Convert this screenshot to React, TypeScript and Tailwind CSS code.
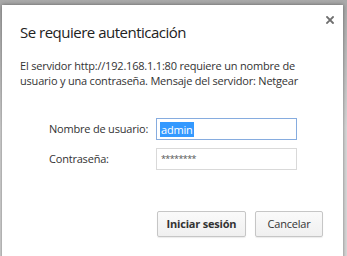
export default function App() {
  return (
    <div className="w-[347px] h-[256px] overflow-hidden bg-gradient-to-b from-[#a9a9a9] via-[#d9d9d9] to-[#d9d9d9] pt-[5px] pl-[2px] pr-[4px] font-['Open_Sans',sans-serif] text-[#333]">
      <div className="relative h-[260px] bg-white shadow-[0_0_4px_rgba(0,0,0,0.45)]">
        {/* close */}
        <svg className="absolute right-[9px] top-[11px]" width="8" height="8" viewBox="0 0 8 8">
          <path d="M1 1 L7 7 M7 1 L1 7" stroke="#6f6f6f" strokeWidth="1.8" strokeLinecap="square" />
        </svg>

        <h1 className="pl-[18px] pt-[17px] text-[15px] leading-[20px] tracking-[-0.5px] text-[#222]">Se requiere autenticación</h1>

        <p className="mt-[16px] pl-[18px] pr-[20px] text-[11px] leading-[15px] tracking-[-0.2px] text-[#333]">
          El servidor http://192.168.1.1:80 requiere un nombre de usuario y una contraseña. Mensaje del servidor: Netgear
        </p>

        <div className="mt-[30px] grid grid-cols-[107px_141px] items-center gap-y-[8px] pl-[47px] text-[11px] tracking-[-0.2px]">
          <label className="whitespace-nowrap">Nombre de usuario:</label>
          <div className="h-[22px] border border-[#86acdf] bg-white px-[3px] flex items-center">
            <span className="bg-[#3399ff] text-white leading-[15px] px-[1px]">admin</span>
          </div>
          <label className="whitespace-nowrap">Contraseña:</label>
          <div className="h-[22px] border border-[#d9d9d9] bg-white px-[4px] flex items-start pt-[3px] text-[9px] tracking-[-0.6px] text-[#555]">
            ********
          </div>
        </div>

        <div className="mt-[41px] flex justify-end gap-[9px] pr-[20px] text-[11px] tracking-[-0.2px]">
          <button className="h-[26px] w-[89px] rounded-[2px] border border-[#c6c6c6] bg-gradient-to-b from-[#fafafa] to-[#f0f0f0] font-bold text-[#333] shadow-[0_1px_1px_rgba(0,0,0,0.08)]">
            Iniciar sesión
          </button>
          <button className="h-[26px] w-[68px] rounded-[2px] border border-[#c6c6c6] bg-gradient-to-b from-[#fafafa] to-[#f0f0f0] text-[#333] shadow-[0_1px_1px_rgba(0,0,0,0.08)]">
            Cancelar
          </button>
        </div>
      </div>
    </div>
  );
}
